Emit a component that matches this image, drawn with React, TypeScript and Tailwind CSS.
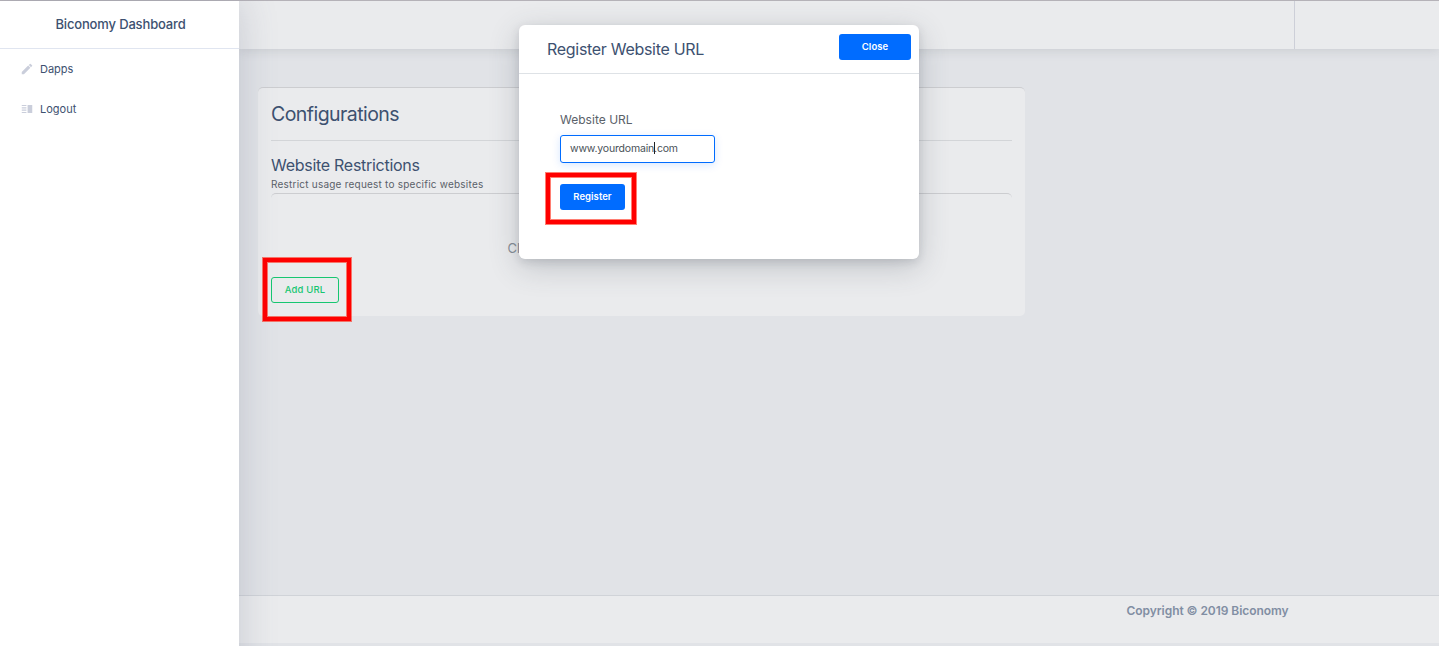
import { MdEdit, MdVerticalSplit } from "react-icons/md";

function Sidebar() {
  return (
    <aside className="relative z-10 -mb-10 flex w-[239px] shrink-0 flex-col bg-white shadow-[1px_0_35px_rgba(90,100,125,0.24)]">
      <h1 className="flex h-[48px] items-center justify-center border-b border-[#e0e5f0] pl-[2px] text-[13px] font-medium tracking-[-0.15px] text-[#3d5170]">
        Biconomy Dashboard
      </h1>
      <nav className="flex flex-col text-[11px] tracking-[0px] text-[#3d5170]">
        <a className="flex h-10 items-center gap-[6px] pl-[20px]">
          <MdEdit className="size-[14px] text-[#cacedb]" />
          Dapps
        </a>
        <a className="flex h-10 items-center gap-[6px] pl-[20px]">
          <MdVerticalSplit className="size-[14px] text-[#cacedb]" />
          Logout
        </a>
      </nav>
    </aside>
  );
}

function Configurations() {
  return (
    <section className="relative ml-[19px] mt-[38px] flex h-[229px] w-[767px] flex-col rounded-[5px] border-t border-[#cccdd0] bg-[#eaebed] px-[13px]">
      <h2 className="flex h-[53px] items-center border-b border-[#d3d5d8] pt-[2px] text-[19.5px] leading-none tracking-[-0.55px] text-[#3d5170]">
        Configurations
      </h2>
      <h3 className="mt-[14px] text-[16px] leading-5 tracking-[-0.28px] text-[#3d5170]">Website Restrictions</h3>
      <p className="mt-[2px] text-[10px] leading-[14px] tracking-[0.22px] text-[#5a6169]">
        Restrict usage request to specific websites
      </p>
      <div className="mt-[2px] flex h-[84px] flex-col items-center rounded-[5px] border-t border-[#cccdd0] pt-[45px] text-[13px] leading-[18px] text-[#868e96]">
        <span className="w-[268px] whitespace-nowrap">Click on Add URL to register a website</span>
      </div>
      <button className="h-[26px] w-[68px] shrink-0 rounded-[3px] border border-[#17c671] text-[9.5px] font-medium tracking-[0.17px] text-[#17c671]">
        Add URL
      </button>
      <div className="pointer-events-none absolute left-[5px] top-[170px] h-[63px] w-[88px] border-4 border-[#ff0000] shadow-[0_0_0_1px_rgba(255,40,20,0.6),inset_0_0_0_1px_rgba(255,40,20,0.6)]" />
    </section>
  );
}

function RegisterDialog() {
  return (
    <div
      role="dialog"
      className="absolute left-[519px] top-[25px] z-20 h-[234px] w-[400px] rounded-[6px] bg-white shadow-[0_8px_30px_rgba(60,66,80,0.24),0_3px_8px_rgba(60,66,80,0.15)]"
    >
      <header className="flex h-[49px] items-start justify-between border-b border-[#dee2e6] pl-[28px] pr-[8px]">
        <h2 className="pt-[14px] text-[16px] leading-5 tracking-[-0.3px] text-[#3d5170]">Register Website URL</h2>
        <button className="mt-[9px] h-[26px] w-[72px] rounded-[3px] bg-[#006cff] text-[9.5px] font-semibold tracking-[0.05px] text-white">
          Close
        </button>
      </header>
      <form className="flex flex-col items-start pl-[41px] pt-[37px]">
        <label className="text-[12px] leading-[18px] tracking-[0.02px] text-[#5a6169]">Website URL</label>
        <div className="mt-[6px] flex h-[28px] w-[155px] items-center rounded-[3px] border border-[#006cff] pl-[9px] text-[10.5px] tracking-[-0.18px] text-[#495057] shadow-[0_2px_8px_rgba(0,108,255,0.16)]">
          <span>www.yourdomain</span>
          <span className="relative -top-px -mr-px h-[12px] w-px bg-[#222222]" />
          <span>.com</span>
        </div>
        <div className="relative mt-[21px]">
          <button
            type="button"
            className="block h-[26px] w-[65px] rounded-[3px] bg-[#006cff] text-[9.5px] font-semibold tracking-[0.05px] text-white"
          >
            Register
          </button>
          <div className="pointer-events-none absolute -left-[14px] -top-[11px] h-[51px] w-[90px] border-4 border-[#ff0000] shadow-[0_0_0_1px_rgba(255,40,20,0.6),inset_0_0_0_1px_rgba(255,40,20,0.6)]" />
        </div>
      </form>
    </div>
  );
}

export default function App() {
  return (
    <div className="relative flex h-[646px] w-[1439px] flex-col overflow-hidden bg-[#e1e3e7] font-[Inter,sans-serif]">
      <div className="relative z-10 h-px shrink-0 bg-[#b5b2b8]" />
      <div className="flex min-h-0 flex-1">
        <Sidebar />
        <div className="flex min-w-0 flex-1 flex-col">
          <header className="flex h-[48px] shrink-0 justify-end bg-[#eaebed] shadow-[0_2px_10px_rgba(80,85,95,0.15)]">
            <div className="w-[145px] border-l border-[#cdcfd8]" />
          </header>
          <main className="flex-1">
            <Configurations />
          </main>
          <footer className="mb-[3px] flex h-[48px] shrink-0 justify-end border-t border-[#d0d3d8] bg-[#eaebed] pr-[150.5px] pt-[6px] text-[12px] font-semibold leading-[18px] tracking-[-0.06px] text-[#818ea3]">
            Copyright © 2019 Biconomy
          </footer>
        </div>
      </div>
      <RegisterDialog />
    </div>
  );
}
